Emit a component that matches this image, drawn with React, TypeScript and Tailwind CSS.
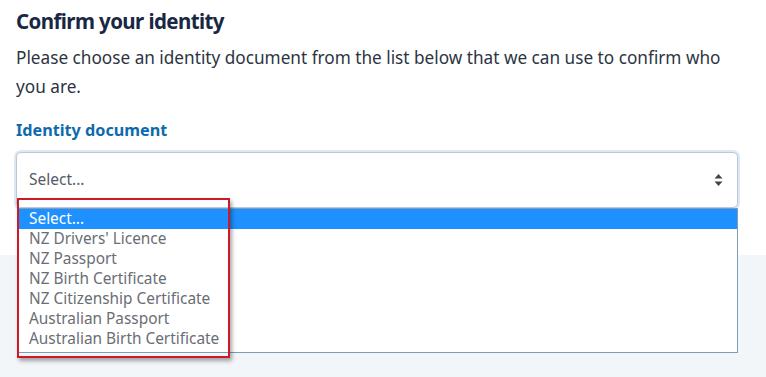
import React from "react";

const options = [
  "Select...",
  "NZ Drivers' Licence",
  "NZ Passport",
  "NZ Birth Certificate",
  "NZ Citizenship Certificate",
  "Australian Passport",
  "Australian Birth Certificate",
];

export default function App() {
  return (
    <div
      className="relative w-[766px] h-[377px] overflow-hidden bg-[#f3f6f9]"
      style={{ fontFamily: '"Noto Sans", "Open Sans", sans-serif' }}
    >
      <div className="bg-white h-[255px] pl-4 pr-[28px] pt-[6px]">
        <h1 className="text-[20.5px] leading-[30px] font-bold tracking-[-0.6px] text-[#1a2744]">
          Confirm your identity
        </h1>
        <p className="mt-[7px] text-[17.2px] leading-[29px] text-[#2c3442]">
          Please choose an identity document from the list below that we can use to confirm who you are.
        </p>
        <div className="mt-[17px] text-[16.2px] leading-[24px] font-bold text-[#0e6aad]">
          Identity document
        </div>
        <div className="relative mt-[10px]">
          <div className="h-[56px] rounded-[5px] border border-[#b9c7d8] shadow-[0_0_0_2px_#dde8f4] bg-white flex items-center justify-between pl-3 pr-[14px]">
            <span className="text-[15.5px] text-[#555b66]">Select...</span>
            <svg width="9" height="14" viewBox="0 0 9 14" className="text-[#444]">
              <path d="M4.5 1 L8.5 5.5 H0.5 Z" fill="currentColor" />
              <path d="M4.5 13 L8.5 8.5 H0.5 Z" fill="currentColor" />
            </svg>
          </div>
          <div className="absolute left-[1px] right-0 top-[56px] bg-white border border-[#7f9db9] pb-[3px] flex flex-col">
            {options.map((o, i) => (
              <div
                key={o}
                className={
                  i === 0
                    ? "h-[20px] leading-[20px] pl-[11px] text-[15.4px] bg-[#1e90ff] text-white"
                    : "h-[20px] leading-[20px] pl-[11px] text-[15.4px] text-[#6a6d74]"
                }
              >
                {o}
              </div>
            ))}
          </div>
          <div className="absolute left-[1px] top-[46px] w-[213px] h-[160px] border-2 border-[#cc1a26] shadow-[2px_3px_4px_rgba(0,0,0,0.35)] pointer-events-none" />
        </div>
      </div>
    </div>
  );
}
